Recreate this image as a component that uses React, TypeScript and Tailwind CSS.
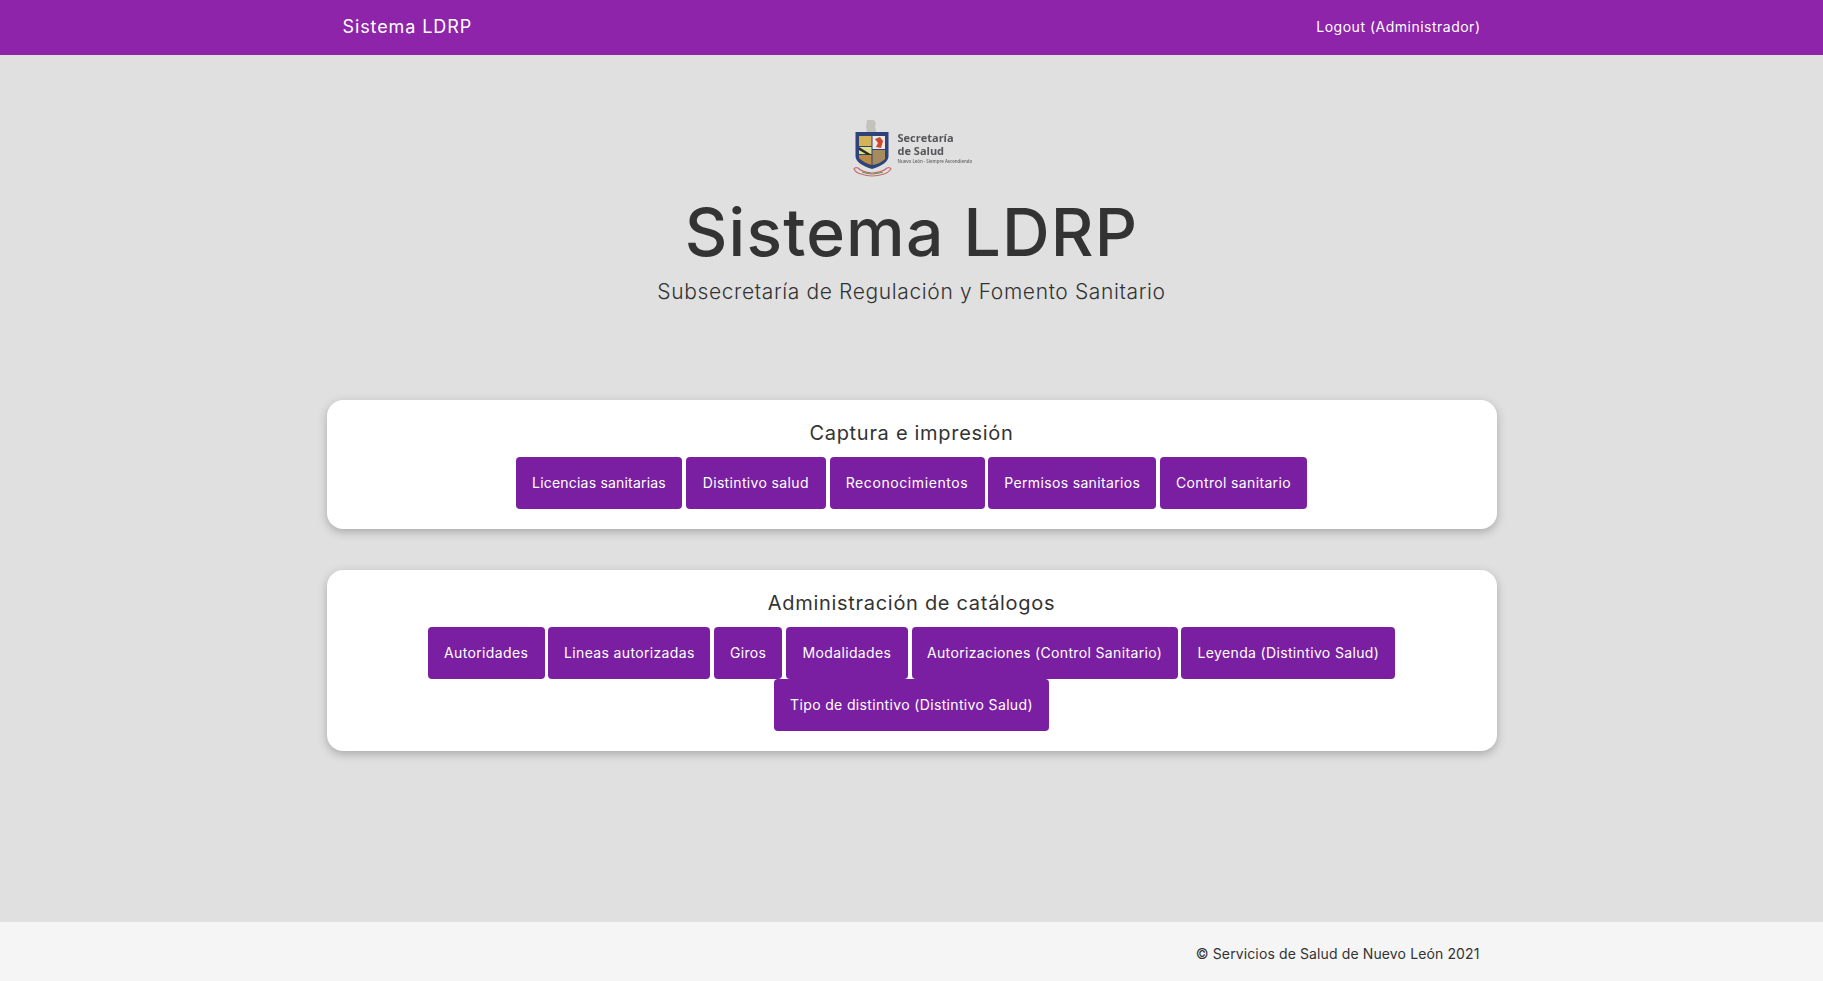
import React from 'react'

const font = "font-['Inter','Open_Sans',sans-serif]"

const capturaLinks = [
  { label: 'Licencias sanitarias', size: 'w-[166px] tracking-[0.2px]' },
  { label: 'Distintivo salud', size: 'w-[140px] tracking-[0.35px]' },
  { label: 'Reconocimientos', size: 'w-[155px] tracking-[0.6px]' },
  { label: 'Permisos sanitarios', size: 'w-[168px] tracking-[0.35px]' },
  { label: 'Control sanitario', size: 'w-[147px] tracking-[0.35px]' }
]

const catalogoLinks = [
  { label: 'Autoridades', size: 'w-[117px] tracking-[0.35px]' },
  { label: 'Lineas autorizadas', size: 'w-[162px] tracking-[0.35px]' },
  { label: 'Giros', size: 'w-[68px] tracking-[0.35px]' },
  { label: 'Modalidades', size: 'w-[122px] tracking-[0.35px]' },
  { label: 'Autorizaciones (Control Sanitario)', size: 'w-[266px] tracking-[0.35px]' },
  { label: 'Leyenda (Distintivo Salud)', size: 'w-[214px] tracking-[0.35px]' },
  { label: 'Tipo de distintivo (Distintivo Salud)', size: 'w-[275px] tracking-[0.35px]' }
]

const Logo = () => (
  <svg width="120" height="60" viewBox="0 0 120 60" className="blur-[0.5px]">
    {/* casco */}
    <path d="M15 2 h7 l2 3 -1 4 1 4 1 4 h-12 l2 -5 -1 -3 z" fill="#c4c2bd" />
    {/* escudo */}
    <path d="M3.5 14 H36.5 V38 Q36.5 46 20 51 Q3.5 46 3.5 38 Z" fill="#2d4379" />
    <path d="M7 18 H19.5 V28 H7 Z" fill="#d6b158" />
    <path d="M20.5 18 H33 V31 H20.5 Z" fill="#ece8e2" />
    <path d="M23 21 l5 -2 3 4 -2 7 -5 -1 2 -4z" fill="#d1492c" />
    <path d="M7 29 H19.5 V36 H7 Z" fill="#dfe08a" />
    <path d="M7 29 L20 37 L19 39 L7 32Z" fill="#2b2b2b" />
    <path d="M7 37 H19.5 V47 Q12 45 7 40Z" fill="#b98a44" />
    <path d="M20.5 32 H33 V41 Q28 46 20.5 47Z" fill="#a58b5e" />
    {/* listón */}
    <path d="M2 51 Q3 49 6 50 Q10 54 20 55 Q31 54 35 50 Q38 49 39 51 Q36 55 32 56 Q20 60 9 56 Q4 55 2 51Z" fill="none" stroke="#c96a6a" strokeWidth="1.2" />
    <path d="M10 54 Q20 58 31 54" stroke="#5d8a5d" strokeWidth="1" fill="none" />
    <text x="45.5" y="24" fontFamily="Open Sans, sans-serif" fontWeight="700" fontSize="11" fill="#55555a">Secretaría</text>
    <text x="45.5" y="37" fontFamily="Open Sans, sans-serif" fontWeight="700" fontSize="11" fill="#55555a">de Salud</text>
    <text x="45.5" y="45" fontFamily="Open Sans, sans-serif" fontWeight="600" fontSize="4.4" fill="#66666a">Nuevo León · Siempre Ascendiendo</text>
  </svg>
)

const MenuCard = ({ title, links }: { title: string; links: { label: string; size: string }[] }) => (
  <section className="bg-white rounded-2xl shadow-[0_3px_10px_rgba(0,0,0,0.25)] px-5 pt-[18px] pb-5">
    <h2 className="text-[20px] leading-[30px] text-[#333] text-center tracking-[0.7px] mb-[9px]">{title}</h2>
    <div className="flex flex-wrap justify-center gap-x-[3.75px]">
      {links.map((link) => (
        <a
          key={link.label}
          className={`${link.size} h-[52px] pb-[2px] flex items-center justify-center rounded bg-[#7b1fa2] text-white text-[14px] whitespace-nowrap`}
        >
          {link.label}
        </a>
      ))}
    </div>
  </section>
)

const App = () => {
  return (
    <div className={`min-h-screen flex flex-col bg-[#e0e0e0] ${font}`}>
      <nav className="h-[55px] bg-[#8e24aa] text-white">
        <div className="w-[1170px] h-full mx-auto pl-[16px] pr-[16px] pb-[2px] flex items-center justify-between">
          <span className="text-[18px] tracking-[0.9px]">Sistema LDRP</span>
          <span className="text-[14px] tracking-[0.5px]">Logout (Administrador)</span>
        </div>
      </nav>

      <main className="flex-1 w-[1170px] mx-auto">
        <div className="flex flex-col items-center pt-[63px] mb-[93px]">
          <Logo />
          <h1 className="mt-5 text-[66px] leading-[69px] font-medium text-[#333] tracking-[1.2px]">Sistema LDRP</h1>
          <p className="mt-[10px] text-[21px] leading-[30px] font-light text-[#333] tracking-[0.62px]">
            Subsecretaría de Regulación y Fomento Sanitario
          </p>
        </div>

        <div className="flex flex-col gap-[41px]">
          <MenuCard title="Captura e impresión" links={capturaLinks} />
          <MenuCard title="Administración de catálogos" links={catalogoLinks} />
        </div>
      </main>

      <footer className="h-[59px] bg-[#f5f5f5]">
        <div className="w-[1170px] h-full mx-auto pl-[15px] pr-[17px] pt-1 flex items-center justify-end">
          <span className="text-[14px] text-[#333] tracking-[0.12px]">© Servicios de Salud de Nuevo León 2021</span>
        </div>
      </footer>
    </div>
  )
}

export default App
